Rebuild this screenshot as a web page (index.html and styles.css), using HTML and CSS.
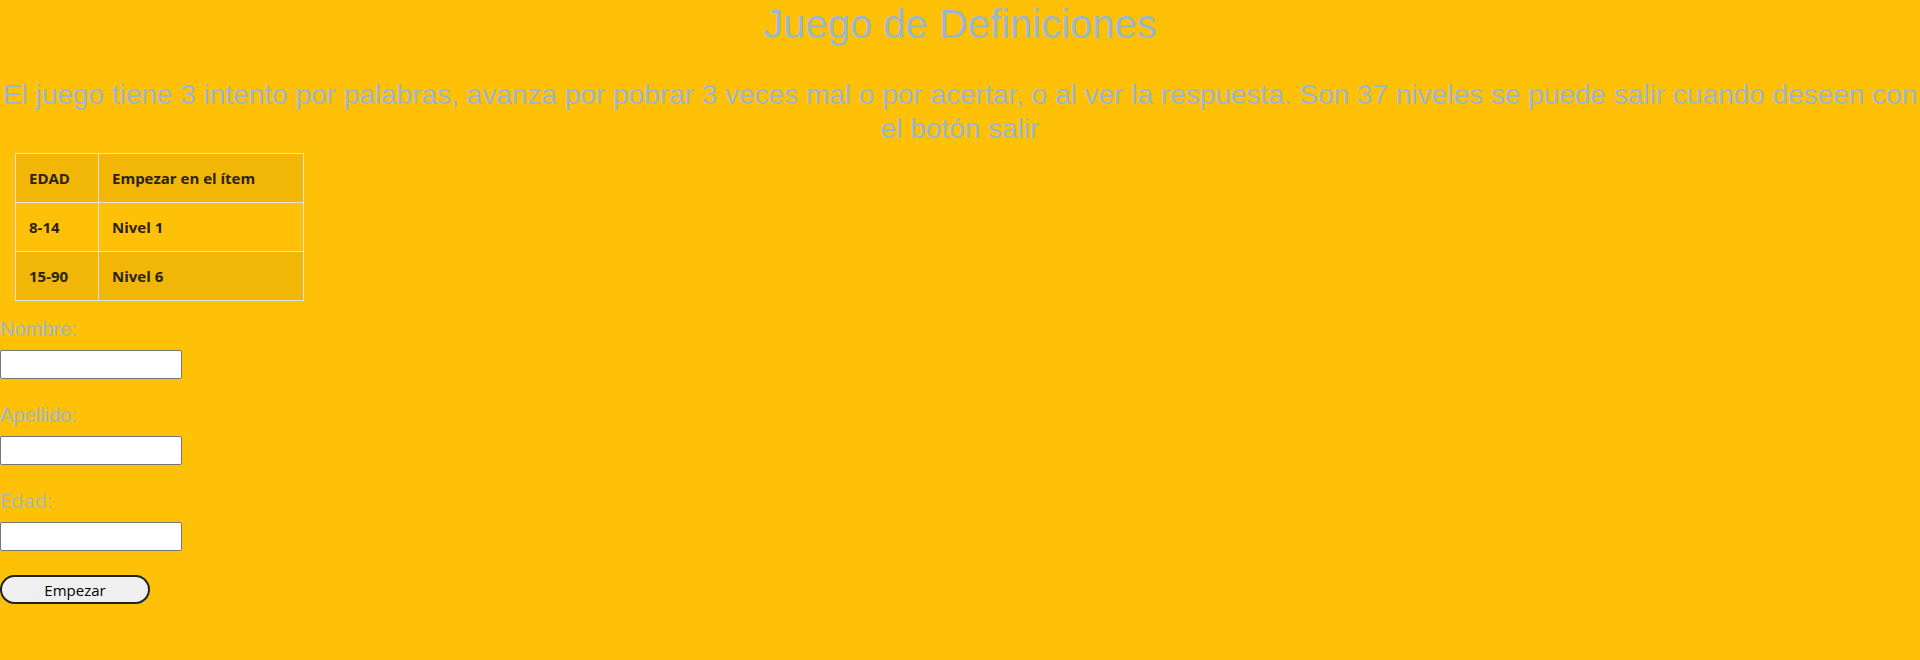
FILE: index.html
```html
<!DOCTYPE html>
<html lang="es">
<head>
<meta charset="utf-8">
<title>Juego de Definiciones</title>
<link rel="stylesheet" href="styles.css">
</head>
<body>
  <h1 class="title">Juego de Definiciones</h1>
  <h3 class="intro">El juego tiene 3 intento por palabras, avanza por pobrar 3 veces mal o por acertar, o al ver la respuesta. Son 37 niveles se puede salir cuando deseen con el botón salir</h3>
  <table class="levels">
    <tbody>
      <tr class="odd"><th class="c1">EDAD</th><th class="c2">Empezar en el ítem</th></tr>
      <tr><th class="c1">8-14</th><th class="c2">Nivel 1</th></tr>
      <tr class="odd"><th class="c1">15-90</th><th class="c2">Nivel 6</th></tr>
    </tbody>
  </table>
  <form class="form">
    <div class="group">
      <label class="lbl" for="nombre">Nombre:</label>
      <input class="field" type="text" id="nombre">
    </div>
    <div class="group">
      <label class="lbl" for="apellido">Apellido:</label>
      <input class="field" type="text" id="apellido">
    </div>
    <div class="group">
      <label class="lbl lbl-alt" for="edad">Edad:</label>
      <input class="field" type="text" id="edad">
    </div>
    <button class="btn" type="button">Empezar</button>
  </form>
</body>
</html>
```
FILE: styles.css
```css
html, body {
  margin: 0;
  padding: 0;
}
body {
  background: #ffc107;
  font-family: "Open Sans", "Noto Sans", sans-serif;
  font-size: 16px;
  color: #212529;
}
.title {
  margin: 0 0 30px 0;
  font-family: "Liberation Sans", Arial, sans-serif;
  font-size: 40px;
  line-height: 48px;
  font-weight: normal;
  text-align: center;
  color: #9db6d0;
}
.intro {
  margin: 0 0 8px 0;
  font-family: "Liberation Sans", Arial, sans-serif;
  font-size: 28px;
  line-height: 33.6px;
  font-weight: normal;
  text-align: center;
  color: #9db6d0;
}
.levels {
  margin: 0 0 16px 15px;
  width: 289px;
  border-collapse: collapse;
}
.levels th {
  border: 1px solid #dee2e6;
  padding: 12px 12px 12px 13px;
  height: 24px;
  line-height: 24px;
  font-size: 15px;
  font-weight: 700;
  text-align: left;
  color: #2a2312;
  box-sizing: content-box;
}
.levels .c1 { width: 57px; }
.levels .odd { background: rgba(0, 0, 0, 0.05); }
.form {
  margin: 0;
}
.group {
  display: flex;
  flex-direction: column;
  align-items: flex-start;
  margin-bottom: 24px;
}
.lbl {
  display: block;
  height: 26px;
  line-height: 25px;
  margin-bottom: 7px;
  font-family: "Liberation Sans", Arial, sans-serif;
  font-size: 20px;
  color: #9db6d0;
}
.lbl-alt {
  font-family: "Open Sans", sans-serif;
  font-size: 20px;
  line-height: 24px;
  color: #a9b7b8;
}
.field {
  box-sizing: border-box;
  width: 182px;
  height: 29px;
  margin: 0;
  border: 1px solid #767676;
  border-radius: 2px;
  background: #fff;
  padding: 1px 2px;
  font-size: 16px;
}
.btn {
  display: block;
  box-sizing: border-box;
  margin: 24px 0 0 0;
  width: 150px;
  height: 29px;
  padding: 0;
  border: 2px solid #222;
  border-radius: 15px;
  background: #efefef;
  font-family: "Open Sans", "Noto Sans", sans-serif;
  font-size: 15px;
  color: #000;
}
```
